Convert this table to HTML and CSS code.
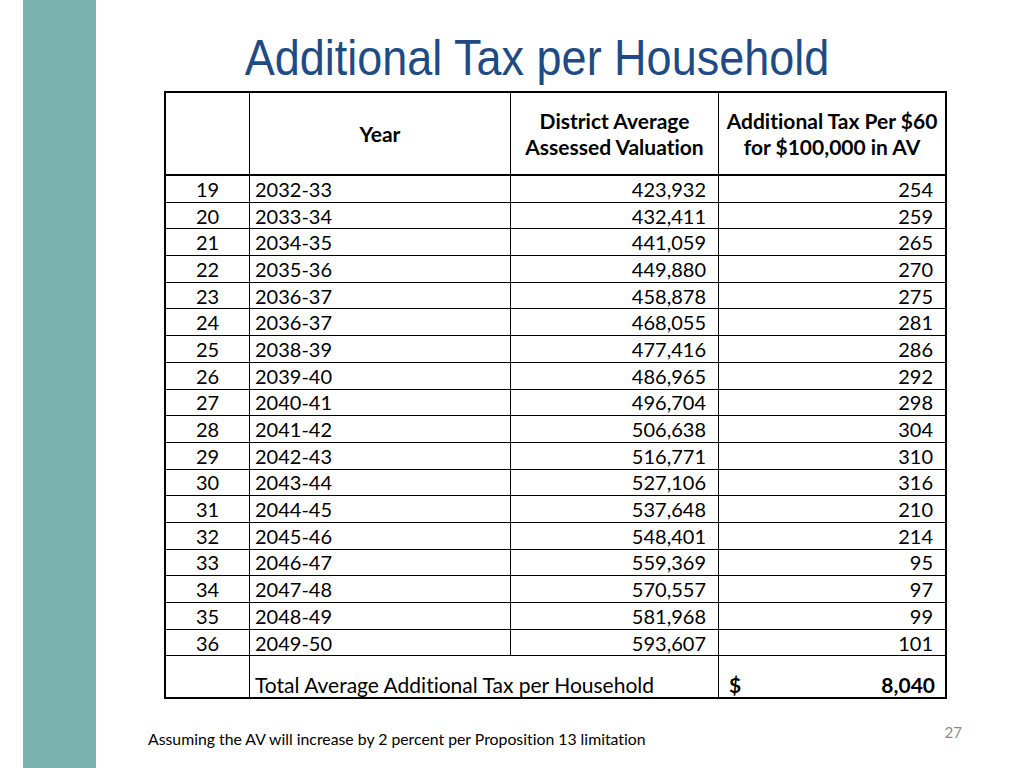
FILE: index.html
```html
<!DOCTYPE html>
<html>
<head>
<meta charset="utf-8">
<link rel="stylesheet" href="styles.css">
</head>
<body>
<div class="slide">
  <div class="bar"></div>
  <div class="content">
    <h1 class="title">Additional Tax per Household</h1>
    <table class="tax">
      <thead>
        <tr>
          <th class="c1"></th>
          <th class="c2">Year</th>
          <th class="c3">District Average<br>Assessed Valuation</th>
          <th class="c4">Additional Tax Per $60<br>for $100,000 in AV</th>
        </tr>
      </thead>
      <tbody>
        <tr><td class="n">19</td><td class="y">2032-33</td><td class="r">423,932</td><td class="r">254</td></tr>
        <tr><td class="n">20</td><td class="y">2033-34</td><td class="r">432,411</td><td class="r">259</td></tr>
        <tr><td class="n">21</td><td class="y">2034-35</td><td class="r">441,059</td><td class="r">265</td></tr>
        <tr><td class="n">22</td><td class="y">2035-36</td><td class="r">449,880</td><td class="r">270</td></tr>
        <tr><td class="n">23</td><td class="y">2036-37</td><td class="r">458,878</td><td class="r">275</td></tr>
        <tr><td class="n">24</td><td class="y">2036-37</td><td class="r">468,055</td><td class="r">281</td></tr>
        <tr><td class="n">25</td><td class="y">2038-39</td><td class="r">477,416</td><td class="r">286</td></tr>
        <tr><td class="n">26</td><td class="y">2039-40</td><td class="r">486,965</td><td class="r">292</td></tr>
        <tr><td class="n">27</td><td class="y">2040-41</td><td class="r">496,704</td><td class="r">298</td></tr>
        <tr><td class="n">28</td><td class="y">2041-42</td><td class="r">506,638</td><td class="r">304</td></tr>
        <tr><td class="n">29</td><td class="y">2042-43</td><td class="r">516,771</td><td class="r">310</td></tr>
        <tr><td class="n">30</td><td class="y">2043-44</td><td class="r">527,106</td><td class="r">316</td></tr>
        <tr><td class="n">31</td><td class="y">2044-45</td><td class="r">537,648</td><td class="r">210</td></tr>
        <tr><td class="n">32</td><td class="y">2045-46</td><td class="r">548,401</td><td class="r">214</td></tr>
        <tr><td class="n">33</td><td class="y">2046-47</td><td class="r">559,369</td><td class="r">95</td></tr>
        <tr><td class="n">34</td><td class="y">2047-48</td><td class="r">570,557</td><td class="r">97</td></tr>
        <tr><td class="n">35</td><td class="y">2048-49</td><td class="r">581,968</td><td class="r">99</td></tr>
        <tr><td class="n">36</td><td class="y">2049-50</td><td class="r">593,607</td><td class="r">101</td></tr>
        <tr class="total">
          <td class="n"></td>
          <td class="y" colspan="2">Total Average Additional Tax per Household</td>
          <td class="sum"><span class="dollar">$</span><span class="amt">8,040</span></td>
        </tr>
      </tbody>
    </table>
    <div class="foot">
      <p class="note">Assuming the AV will increase by 2 percent per Proposition 13 limitation</p>
      <span class="page">27</span>
    </div>
  </div>
</div>
</body>
</html>
```

FILE: styles.css
```css
html, body {
  margin: 0;
  padding: 0;
  background: #ffffff;
}
.slide {
  width: 1024px;
  height: 768px;
  display: flex;
  overflow: hidden;
  font-family: "Lato", "Open Sans", sans-serif;
  font-variant-ligatures: none;
}
.bar {
  width: 73px;
  height: 768px;
  margin-left: 23px;
  background: #7bb3ae;
  flex: none;
}
.content {
  flex: 1;
  display: flex;
  flex-direction: column;
}
.title {
  margin: 26px 0 0 0;
  width: 882px;
  height: 58px;
  box-sizing: border-box;
  padding-top: 6px;
  font-family: "Liberation Sans", Arial, sans-serif;
  font-weight: normal;
  font-size: 45px;
  line-height: 52px;
  color: #1f4b85;
  text-align: center;
  transform: scaleY(1.1);
}
.tax {
  margin-left: 68px;
  margin-top: 7px;
  border-collapse: collapse;
  border: 2px solid #000;
  width: 783px;
  font-size: 20px;
  color: #000;
  table-layout: fixed;
}
.tax th, .tax td {
  border: 1px solid #000;
  padding: 0;
}
.tax th {
  height: 80px;
  font-weight: bold;
  font-size: 21px;
  line-height: 26px;
  text-align: center;
  vertical-align: middle;
  padding-top: 1px;
}
.tax th.c1 { width: 83px; }
.tax th.c2 { width: 260px; }
.tax th.c3 { width: 207px; }
.tax thead tr { border-bottom: 2px solid #000; }
.tax td {
  height: 25.7px;
  line-height: 24px;
}
.tax td.n { text-align: center; }
.tax td.y { text-align: left; padding-left: 5px; }
.tax td.r { text-align: right; padding-right: 12px; }
.tax tr.total td {
  height: 41px;
  vertical-align: bottom;
  font-size: 21px;
}
.tax td.sum {
  font-weight: bold;
  font-size: 20px;
  padding-left: 10px;
  padding-right: 10px;
}
.sum {
  white-space: nowrap;
}
.dollar { float: left; }
.amt { float: right; }
.foot {
  display: flex;
  align-items: flex-start;
  justify-content: space-between;
  width: 814px;
  margin-top: 20px;
  margin-left: 52px;
}
.note {
  margin: 10px 0 0 0;
  font-size: 15.8px;
  color: #000;
}
.page {
  font-size: 15px;
  color: #8a8a8a;
  margin-top: 4px;
}
```
